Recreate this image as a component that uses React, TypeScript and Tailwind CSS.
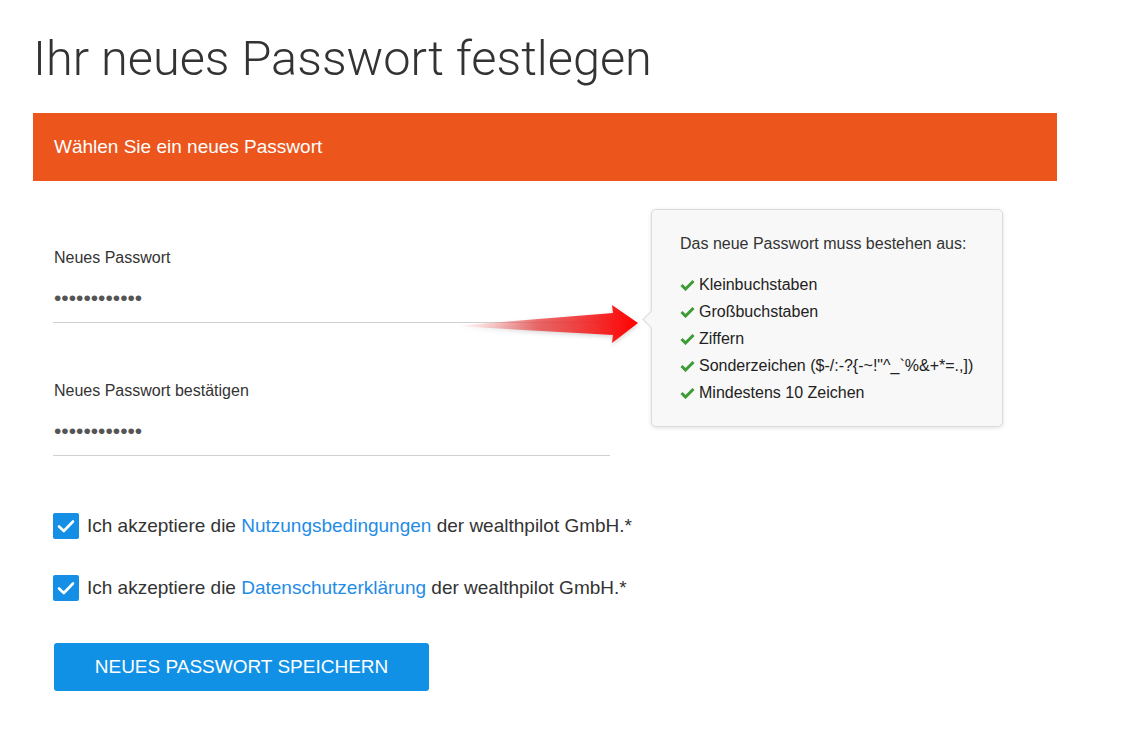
import { useState } from "react";

const rules = [
  "Kleinbuchstaben",
  "Großbuchstaben",
  "Ziffern",
  "Sonderzeichen ($-/:-?{-~!\"^_`%&+*=.,])",
  "Mindestens 10 Zeichen",
];

function GreenCheck() {
  return (
    <svg width="15" height="12" viewBox="0 0 15 12" className="shrink-0">
      <polyline points="1.5,6 5.5,10 13.5,2" fill="none" stroke="#3d9b35" strokeWidth="3" />
    </svg>
  );
}

function PasswordField({ label }: { label: string }) {
  return (
    <div className="w-[557px]">
      <div className="pl-px text-[16px] leading-[20px] text-[#333]">{label}</div>
      <div className="h-[55px] border-b border-[#d0d0d0] pl-px pt-[20px]">
        <span className="block text-[21px] leading-[20px] text-[#555]">••••••••••••</span>
      </div>
    </div>
  );
}

function Agreement({ link }: { link: string }) {
  const [checked, setChecked] = useState(true);
  return (
    <label className="flex h-[26px] items-center gap-[8px] text-[19px] leading-[26px] text-[#333] cursor-pointer">
      <button
        type="button"
        onClick={() => setChecked(!checked)}
        className={`grid place-items-center w-[26px] h-[26px] shrink-0 rounded-[2px] ${checked ? "bg-[#148fe5]" : "bg-white border border-[#aaa]"}`}
      >
        {checked && (
          <svg width="18" height="14" viewBox="0 0 18 14">
            <polyline points="2,7.5 6.8,12 16,2.5" fill="none" stroke="#fff" strokeWidth="2.6" strokeLinecap="round" strokeLinejoin="round" />
          </svg>
        )}
      </button>
      <span>
        Ich akzeptiere die <a className="text-[#1f8ce6]">{link}</a> der wealthpilot GmbH.*
      </span>
    </label>
  );
}

function Arrow() {
  return (
    <svg width="190" height="42" viewBox="0 0 190 42" className="absolute left-[420px] top-[124px] drop-shadow-[0_2px_2px_rgba(0,0,0,0.18)]">
      <defs>
        <linearGradient id="arrowFade" x1="0" y1="0" x2="1" y2="0">
          <stop offset="0" stopColor="#ff9a9a" stopOpacity="0" />
          <stop offset="0.45" stopColor="#e84a4a" stopOpacity="0.8" />
          <stop offset="1" stopColor="#ff0000" />
        </linearGradient>
      </defs>
      <polygon points="0,21 160,8 159,0 185,18 159,38 160,30" fill="url(#arrowFade)" />
    </svg>
  );
}

export default function App() {
  return (
    <div className="min-h-screen bg-white font-['Liberation_Sans',Arial,sans-serif]">
      <div className="w-[1057px] pl-[33px]">
        <h1 className="pt-[30px] font-['Roboto',sans-serif] text-[48.7px] font-light leading-[58px] text-[#333]">
          Ihr neues Passwort festlegen
        </h1>

        <div className="mt-[25px] flex h-[68px] items-center bg-[#ec551c] px-[21px] text-[19px] text-white">
          Wählen Sie ein neues Passwort
        </div>

        <div className="relative px-[20px] pt-[67px] pb-[48px]">
          <PasswordField label="Neues Passwort" />
          <div className="mt-[58px]">
            <PasswordField label="Neues Passwort bestätigen" />
          </div>

          <div className="mt-[57px] flex flex-col gap-[36px]">
            <Agreement link="Nutzungsbedingungen" />
            <Agreement link="Datenschutzerklärung" />
          </div>

          <button
            type="button"
            className="mt-[42px] ml-px block h-[48px] w-[375px] rounded-[3px] bg-[#1191e6] text-[19px] text-white"
          >
            NEUES PASSWORT SPEICHERN
          </button>

          <Arrow />

          <div className="absolute left-[618px] top-[28px] w-[352px] rounded-[5px] border border-[#dcdcdc] bg-[#f8f8f8] px-[28px] pt-[24px] pb-[20px] shadow-[0_1px_4px_rgba(0,0,0,0.12)]">
            <span className="absolute left-[-7px] top-[103px] h-[13px] w-[13px] rotate-45 border-b border-l border-[#dcdcdc] bg-[#f8f8f8]" />
            <p className="text-[16px] leading-[20px] text-[#333]">Das neue Passwort muss bestehen aus:</p>
            <ul className="mt-[17px]">
              {rules.map((r) => (
                <li key={r} className="flex items-center gap-[4px] text-[16px] leading-[27px] text-[#222]">
                  <GreenCheck />
                  {r}
                </li>
              ))}
            </ul>
          </div>
        </div>
      </div>
    </div>
  );
}
